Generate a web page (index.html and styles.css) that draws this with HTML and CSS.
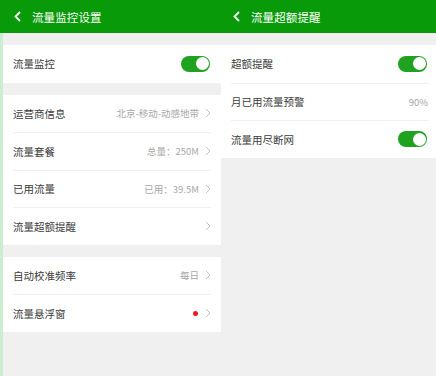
FILE: index.html
```html
<!DOCTYPE html>
<html lang="zh">
<head>
<meta charset="utf-8">
<link rel="stylesheet" href="styles.css">
</head>
<body>
<div class="page">
  <section class="screen left">
    <header class="bar">
      <svg class="back" width="8" height="11" viewBox="0 0 8 11"><polyline points="6,1 1.5,5.5 6,10" fill="none" stroke="#fff" stroke-width="1.8"/></svg>
      <span class="title">流量监控设置</span>
    </header>
    <div class="group">
      <div class="row"><span class="label">流量监控</span><span class="toggle"><span class="knob"></span></span></div>
    </div>
    <div class="group">
      <div class="row"><span class="label">运营商信息</span><span class="value">北京-移动-动感地带</span><svg class="chev" width="6" height="10" viewBox="0 0 6 10"><polyline points="1,1 5,5 1,9" fill="none" stroke="#c4c4c4" stroke-width="1"/></svg></div>
      <div class="row"><span class="label">流量套餐</span><span class="value">总量：250M</span><svg class="chev" width="6" height="10" viewBox="0 0 6 10"><polyline points="1,1 5,5 1,9" fill="none" stroke="#c4c4c4" stroke-width="1"/></svg></div>
      <div class="row"><span class="label">已用流量</span><span class="value">已用：39.5M</span><svg class="chev" width="6" height="10" viewBox="0 0 6 10"><polyline points="1,1 5,5 1,9" fill="none" stroke="#c4c4c4" stroke-width="1"/></svg></div>
      <div class="row"><span class="label">流量超额提醒</span><svg class="chev" width="6" height="10" viewBox="0 0 6 10"><polyline points="1,1 5,5 1,9" fill="none" stroke="#c4c4c4" stroke-width="1"/></svg></div>
    </div>
    <div class="group">
      <div class="row"><span class="label">自动校准频率</span><span class="value">每日</span><svg class="chev" width="6" height="10" viewBox="0 0 6 10"><polyline points="1,1 5,5 1,9" fill="none" stroke="#c4c4c4" stroke-width="1"/></svg></div>
      <div class="row"><span class="label">流量悬浮窗</span><span class="dot"></span><svg class="chev" width="6" height="10" viewBox="0 0 6 10"><polyline points="1,1 5,5 1,9" fill="none" stroke="#c4c4c4" stroke-width="1"/></svg></div>
    </div>
  </section>
  <section class="screen right">
    <header class="bar">
      <svg class="back" width="8" height="11" viewBox="0 0 8 11"><polyline points="6,1 1.5,5.5 6,10" fill="none" stroke="#fff" stroke-width="1.8"/></svg>
      <span class="title">流量超额提醒</span>
    </header>
    <div class="group">
      <div class="row"><span class="label">超额提醒</span><span class="toggle"><span class="knob"></span></span></div>
      <div class="row"><span class="label">月已用流量预警</span><span class="value end">90%</span></div>
      <div class="row"><span class="label">流量用尽断网</span><span class="toggle"><span class="knob"></span></span></div>
    </div>
  </section>
</div>
</body>
</html>
```

FILE: styles.css
```css
* { box-sizing: border-box; }
html, body { margin: 0; padding: 0; }
body {
  width: 436px;
  height: 376px;
  overflow: hidden;
  background: #f0f0f0;
  font-family: "Noto Sans CJK SC", "Noto Sans", sans-serif;
}
.page {
  display: flex;
  height: 376px;
}
.screen {
  display: flex;
  flex-direction: column;
  gap: 12px;
  background: #f0f0f0;
}
.left {
  width: 221px;
  border-left: 3px solid #cbeed3;
}
.right {
  width: 215px;
}
.bar {
  height: 33px;
  background: #089a08;
  display: flex;
  align-items: center;
  padding-left: 12px;
  gap: 10px;
}
.left .bar {
  margin-left: -3px;
  padding-left: 14px;
}
.title {
  color: #fff;
  font-size: 11.5px;
  letter-spacing: 0.1px;
}
.back { display: block; }
.group {
  background: #fff;
  display: flex;
  flex-direction: column;
  padding-left: 10px;
  padding-right: 10px;
}
.right .group { padding-left: 10px; padding-right: 8px; }
.row {
  height: 37.5px;
  display: flex;
  align-items: center;
  border-top: 1px solid #efefef;
}
.row:first-child { border-top: none; }
.label {
  flex: 1;
  font-size: 10.5px;
  color: #3c3c3c;
}
.value {
  font-size: 9.5px;
  color: #a8a8a8;
  margin-right: 6px;
}
.value.end { margin-right: 0; }
.chev { display: block; }
.dot {
  width: 5px;
  height: 5px;
  border-radius: 50%;
  background: #f01818;
  margin-right: 7px;
}
.toggle {
  width: 29px;
  height: 16px;
  border-radius: 8px;
  background: #1fa21f;
  position: relative;
  margin-right: 1px;
}
.knob {
  position: absolute;
  right: 1.5px;
  top: 1.5px;
  width: 13px;
  height: 13px;
  border-radius: 50%;
  background: #fff;
}
```
